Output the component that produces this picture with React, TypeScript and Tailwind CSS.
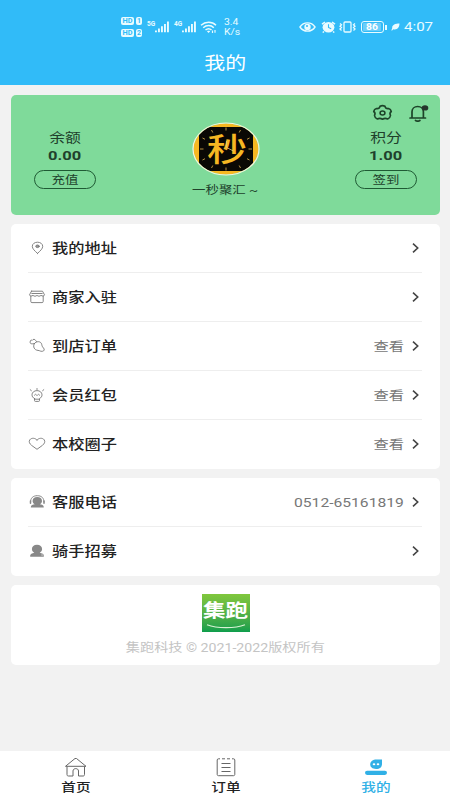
import React from "react";
import clsx from "clsx";

type IconProps = { className?: string };

type MenuItem = {
    label: string;
    icon: React.FC<IconProps>;
    value?: string;
};

// Wide lettering: every text on the screen is set a bit broader than the font itself
const Wide: React.FC<{ className?: string; children: React.ReactNode }> = ({ className, children }) => (
    <span className={clsx("block whitespace-nowrap", className, !className?.includes("scale-x") && "scale-x-[1.22]")}>
        {children}
    </span>
);

/* ---------- row icons, all on a 18x16 grid ---------- */

const rowIcon = {
    viewBox: "0 0 18 16",
    fill: "none",
    stroke: "#777",
    strokeWidth: 0.9,
    strokeLinecap: "round" as const,
    strokeLinejoin: "round" as const,
};

const PinIcon: React.FC<IconProps> = ({ className }) => (
    <svg className={className} {...rowIcon}>
        <path d="M9.500 13.400C6.600 10.700 4.300 8.800 4.300 6.300c0-2.400 2.300-4.100 5.200-4.100s5.200 1.700 5.200 4.100c0 2.500-2.300 4.400-5.200 7.100Z" />
        <ellipse cx="9.500" cy="6.300" rx="1.700" ry="1.300" fill="#999" />
    </svg>
);

const ShopIcon: React.FC<IconProps> = ({ className }) => (
    <svg className={className} {...rowIcon}>
        <path d="M3.500 2.200h11l2 3.600c0 1.300-2.400 1.700-3.500.5-1 1.200-3 1.200-4 0-1 1.200-3 1.200-4 0-1.100 1.200-3.500.8-3.500-.5l2-3.600Z" />
        <path d="M3.800 4.500h10.400M2.800 7.300v5.200c0 .8.500 1.100 1.200 1.100h10c.7 0 1.200-.3 1.200-1.100V7.300" />
    </svg>
);

const DrumstickIcon: React.FC<IconProps> = ({ className }) => (
    <svg className={className} {...rowIcon}>
        <path d="M6.300 5.700C8 2.700 13 3 13.700 6.300c.3 1.500.5 2.400 1.800 3.700 1.300 1.300.8 3.200-1.200 3.300-2 .2-2.300-.7-4.300-.9-3.700-.3-5.400-3.700-3.700-6.700Z" />
        <path d="M6.300 5.700 4.300 5.800C2.800 6 1.700 5 2.300 4c-.6-1.400.9-2.300 2-1.700C5 1 7 1 7.500 2.300l1 1.200" />
    </svg>
);

const BulbIcon: React.FC<IconProps> = ({ className }) => (
    <svg className={className} {...rowIcon}>
        <path d="M6.500 11.600C4.700 10.600 4 9.300 4 7.800c0-2.400 2.200-4.200 5-4.200s5 1.800 5 4.200c0 1.500-.7 2.800-2.500 3.800v2c0 .5-.4.800-.9.800H7.400c-.5 0-.9-.3-.9-.8v-2ZM6.700 12.200h4.600" />
        <path d="M9 1.500v1M2.200 2.700l1.200 1M15.800 2.700l-1.200 1M6.500 8.200l1-.9 1.100.9M9.500 8.200l1-.9 1.100.9" />
    </svg>
);

const HeartIcon: React.FC<IconProps> = ({ className }) => (
    <svg className={className} {...rowIcon}>
        <path d="M9 4C7.200 1.800 3.500 1.600 1.800 3.800c-1.400 2 0 4.100 1.700 5.500L9 13.300l5.500-4C16.200 7.900 17.600 5.800 16.200 3.800 14.500 1.600 10.800 1.800 9 4Z" />
    </svg>
);

const HeadsetIcon: React.FC<IconProps> = ({ className }) => (
    <svg className={className} {...rowIcon} stroke="#888">
        <path d="M2.500 8C2.500 4 5 1.700 9.300 1.700S16 4 16 8" strokeWidth="1" />
        <path d="M2.500 7v2.300M16 7v2.300" strokeWidth="1.500" />
        <path d="M9.300 3C6.400 3 4.600 4.600 4.600 7c0 1.500.9 2.700 2.200 3.300-2 .3-3.800 1.100-4 2.600 0 .4.200.6.600.6h11.800c.4 0 .6-.2.600-.6-.2-1.500-2-2.300-4-2.600C13.100 9.700 14 8.500 14 7c0-2.400-1.800-4-4.700-4Z" fill="#888" stroke="none" />
    </svg>
);

const RiderIcon: React.FC<IconProps> = ({ className }) => (
    <svg className={className} {...rowIcon} stroke="none" fill="#888">
        <path d="M9 1.700c-3.100 0-5.100 1.700-5.100 4.200 0 1.800 1 3 2.400 3.800-2.200.4-4.200 1.400-4.200 3.200 0 .6.300.9.800.9h12.200c.5 0 .8-.3.800-.9 0-1.800-2-2.800-4.200-3.200 1.400-.8 2.400-2 2.400-3.800 0-2.500-2-4.200-5.100-4.200Z" />
        <circle cx="14.300" cy="12" r="1.200" fill="#aaa" />
    </svg>
);

const ChevronIcon: React.FC<IconProps> = ({ className }) => (
    <svg className={className} viewBox="0 0 7 10" fill="none" stroke="#444" strokeWidth="1.600">
        <path d="m1 .7 4.700 4.300L1 9.300" />
    </svg>
);

/* ---------- status bar ---------- */

const HdBadge: React.FC<{ sim: string }> = ({ sim }) => (
    <div className="flex h-[8px] gap-[2px] text-[7px] font-bold leading-[8px] text-[#31bbf8]">
        <span className="w-[13px] rounded-[2px] bg-[#e9fbff] text-center">
            <Wide className="scale-x-[1.05]">HD</Wide>
        </span>
        <span className="w-[6px] rounded-[2px] bg-[#e9fbff] text-center">{sim}</span>
    </div>
);

const Signal: React.FC<{ net: string }> = ({ net }) => (
    <div className="flex h-[12px] w-[23px] items-start">
        <span className="w-[7px] text-[6.500px] font-bold leading-[7px]">{net}</span>
        <svg className="h-[12px] w-[16px]" viewBox="0 0 16 12" fill="#e9fbff">
            <path d="M1 9.500h1.900V11.300H1zM4 7.500h1.900v3.800H4zM7 5.300h1.900v6H7zM10 3h1.900v8.300H10zM13 .5h1.900v10.800H13z" />
        </svg>
    </div>
);

const StatusBar: React.FC = () => (
    <div className="flex h-[44px] items-start justify-between pl-[121px] pr-[18px] pt-[17px] text-[#e9fbff]">
        <div className="flex">
            <div className="flex flex-col gap-[4px]">
                <HdBadge sim="1" />
                <HdBadge sim="2" />
            </div>
            <div className="ml-[5px] mt-[4px] flex gap-[4px]">
                <Signal net="5G" />
                <Signal net="4G" />
            </div>
            <svg className="ml-[3px] mt-[4px] h-[13px] w-[18px]" viewBox="0 0 18 13" fill="none" stroke="#e9fbff" strokeWidth="1.500">
                <path d="M1 4.300C5.500.3 12 .3 16 4.300M3.200 6.700c3.300-2.900 7.700-2.900 10.600 0M5.500 9c1.900-1.600 4.300-1.600 6 0" />
                <path d="M7 10.300 8.500 12l1.700-1.700C9.300 9.700 7.900 9.700 7 10.300Z" fill="#e9fbff" stroke="none" />
                <path d="M12.500 12V9.500M15 9v2.800" strokeWidth="1.200" />
            </svg>
            <div className="ml-[6px] text-[8.500px] leading-[10px]">
                <Wide className="origin-left">3.4</Wide>
                <Wide className="origin-left">K/s</Wide>
            </div>
        </div>
        <div className="mt-[2px] flex h-[16px] items-center">
            <svg className="h-[12px] w-[17px]" viewBox="0 0 17 12" fill="none" stroke="#e9fbff">
                <path d="M1 6c3.500-5.500 11.500-5.500 15 0-3.500 5.500-11.500 5.500-15 0Z" strokeWidth="1.400" />
                <circle cx="8.500" cy="6" r="3.200" fill="#e9fbff" stroke="none" />
                <circle cx="8" cy="5" r="1" fill="#31bbf8" stroke="none" />
            </svg>
            <svg className="ml-[5px] h-[12px] w-[15px]" viewBox="0 0 15 12">
                <ellipse cx="7.500" cy="6.300" rx="5.900" ry="5.200" fill="#e9fbff" />
                <path d="M1 3.200 4 1M14 3.200 11 1M3 10.500l-1.300 1M12 10.500l1.300 1" stroke="#e9fbff" strokeWidth="1.500" />
                <path d="M7.500 3.300v3.200l2.700 1.300" stroke="#31bbf8" strokeWidth="1.100" fill="none" />
            </svg>
            <svg className="ml-[3px] h-[12px] w-[17px]" viewBox="0 0 17 12" fill="none" stroke="#e9fbff" strokeWidth="1.300">
                <rect x="5" y="1" width="7" height="10" rx="1" />
                <path d="m1 2.500 1.500 1.300L1 5.200l1.500 1.400L1 8l1.500 1.400M16 2.500l-1.500 1.300L16 5.200l-1.500 1.400L16 8l-1.500 1.400" />
            </svg>
            <div className="ml-[5px] flex h-[12px] w-[23px] rounded-[3px] border border-[#e9fbff] p-px">
                <div className="w-[18px] rounded-[1px] bg-[#6bcdf9] text-center text-[9px] font-bold leading-[9px] text-white">
                    <Wide className="scale-x-[1.15]">86</Wide>
                </div>
            </div>
            <div className="ml-px h-[5px] w-[2px] bg-[#e9fbff]" />
            <svg className="ml-[4px] h-[8px] w-[9px]" viewBox="0 0 10 9" fill="#e9fbff">
                <path d="M9.500.5C5 .7 1 1.800 1.300 5.500L.3 8.300l.9.200L2.500 7C7 8 9.300 5 9.500.5Z" />
            </svg>
            <div className="ml-[4px] w-[28px] text-[13px] leading-4">
                <Wide className="origin-left scale-x-[1.160]">4:07</Wide>
            </div>
        </div>
    </div>
);

/* ---------- wallet card ---------- */

const Balance: React.FC<{ title: string; amount: string; action: string }> = ({ title, amount, action }) => (
    <div className="flex w-[108px] flex-col items-center pt-[33px] text-[#20402b]">
        <Wide className="text-[13px] leading-[19px]">{title}</Wide>
        <Wide className="text-[13.500px] font-bold leading-4">{amount}</Wide>
        <button className="mt-[7px] flex h-[19px] w-[62px] items-center justify-center rounded-full border border-[#1f5a34] pt-px text-[11px] leading-none">
            <Wide>{action}</Wide>
        </button>
    </div>
);

const Avatar: React.FC = () => (
    <svg className="h-[54px] w-[68px]" viewBox="0 0 68 54">
        <defs>
            <clipPath id="avatar">
                <ellipse cx="34" cy="27" rx="32.500" ry="25.500" />
            </clipPath>
        </defs>
        <g clipPath="url(#avatar)">
            <rect width="68" height="54" fill="#f6b722" />
            <rect x="7" y="5" width="54" height="44" rx="7" fill="#0a0804" />
        </g>
        <ellipse cx="34" cy="27" rx="33" ry="26" fill="none" stroke="#f3f6dc" strokeWidth="1.200" />
        <path
            d="M34 5.500v3M34 45.500v3M8 27h3.500M56.500 27h3.500M19.500 8l1.300 2.500M48.500 8l-1.300 2.500M19.500 46l1.300-2.500M48.500 46l-1.300-2.500M10.500 16l2.500 1.300M57.500 16 55 17.300M10.500 38l2.500-1.300M57.500 38 55 36.700"
            stroke="#c9a24a"
            strokeWidth="0.900"
        />
        <text
            transform="translate(35 38.500) scale(1.250 1)"
            textAnchor="middle"
            fontSize="32"
            fontWeight="500"
            fill="#f6b722"
        >
            秒
        </text>
        <path d="M34.500 19v6.500l7 3.500" fill="none" stroke="#e6c878" strokeWidth="0.800" />
    </svg>
);

const WalletCard: React.FC = () => (
    <section className="relative flex h-[120px] justify-between rounded-[5px] bg-[#7fda9a]">
        <Balance title="余额" amount="0.00" action="充值" />
        <div className="flex flex-col items-center pt-[27px] text-[#20402b]">
            <Avatar />
            <Wide className="mt-[7px] text-[11px] leading-4">一秒聚汇 ~</Wide>
        </div>
        <Balance title="积分" amount="1.00" action="签到" />
        <div className="absolute right-[11px] top-[9px] flex gap-[15px]">
            <svg className="h-[18px] w-[21px]" viewBox="0 0 21 18" fill="none" stroke="#1d4429" strokeWidth="1.600" strokeLinejoin="round">
                <path d="M8 2.300Q10.500 1 13 2.300C13.300 4 14.300 4.800 16.500 4.600Q18.800 5.200 19.300 7.500C17.700 8.700 17.500 9.800 18.500 11.500Q18.200 14 15.700 15C13.700 14 12.500 14 10.500 15.200 8.500 14 7.300 14 5.300 15Q2.800 14 2.500 11.500C3.500 9.800 3.300 8.700 1.700 7.500Q2.200 5.200 4.500 4.600C6.700 4.800 7.700 4 8 2.300Z" />
                <ellipse cx="10.500" cy="9" rx="2.400" ry="2" />
            </svg>
            <svg className="h-[18px] w-[21px]" viewBox="0 0 21 18" fill="none" stroke="#1d4429" strokeWidth="1.700" strokeLinecap="round">
                <path d="M2 14h15.500M4 14V7.800c0-3 2.300-5.300 5.700-5.300 3.400 0 5.700 2.300 5.700 5.300V14M7.500 16.500c1.300.8 3.100.8 4.400 0" />
                <ellipse cx="17" cy="3.900" rx="3.300" ry="2.700" fill="#26352b" stroke="none" />
            </svg>
        </div>
    </section>
);

/* ---------- menu ---------- */

const services: MenuItem[] = [
    { label: "我的地址", icon: PinIcon },
    { label: "商家入驻", icon: ShopIcon },
    { label: "到店订单", icon: DrumstickIcon, value: "查看" },
    { label: "会员红包", icon: BulbIcon, value: "查看" },
    { label: "本校圈子", icon: HeartIcon, value: "查看" },
];

const contacts: MenuItem[] = [
    { label: "客服电话", icon: HeadsetIcon, value: "0512-65161819" },
    { label: "骑手招募", icon: RiderIcon },
];

const MenuCard: React.FC<{ items: MenuItem[] }> = ({ items }) => (
    <section className="rounded-[5px] bg-white pl-[17px] pr-[18px]">
        {items.map(({ label, icon: Icon, value }) => (
            <div key={label} className="flex h-[49px] items-center border-b border-[#eeeeee] last:border-b-transparent">
                <Icon className="h-4 w-[18px]" />
                <Wide className="ml-[5.500px] origin-left pt-[2px] text-[13.300px] font-medium text-[#222]">{label}</Wide>
                <div className="ml-auto flex items-center">
                    {value && (
                        <Wide
                            className={clsx(
                                "origin-right pt-[2px] text-[12.500px] text-[#777]",
                                value.length > 2 ? "scale-x-[1.250]" : "scale-x-[1.220]"
                            )}
                        >
                            {value}
                        </Wide>
                    )}
                    <ChevronIcon className="ml-[8px] mr-[3px] h-[10px] w-[7px]" />
                </div>
            </div>
        ))}
    </section>
);

const CompanyCard: React.FC = () => (
    <section className="flex h-[80px] flex-col items-center rounded-[5px] bg-white pt-[9px]">
        <div className="flex h-[38px] w-[48px] flex-col items-center bg-linear-to-b from-[#80c73c] to-[#0b9e4c] pt-[7px] text-white">
            <Wide className="text-[18.500px] font-bold leading-[20px]">集跑</Wide>
            <svg className="mt-[3px] h-[5px] w-[40px]" viewBox="0 0 40 5" fill="none" stroke="#d9f2d4">
                <path d="M1 .7c10 4 28 4 38 0" strokeWidth="1.200" />
            </svg>
        </div>
        <Wide className="mt-[7px] scale-x-[1.180] text-[12px] leading-[18px] text-[#c4c4c4]">
            集跑科技 © 2021-2022版权所有
        </Wide>
    </section>
);

/* ---------- bottom tabs ---------- */

const HomeIcon: React.FC<IconProps> = ({ className }) => (
    <svg className={className} viewBox="0 0 24 20" fill="none" stroke="#666" strokeWidth="1" strokeLinejoin="round">
        <path d="M1.500 9.300 11 1.500h1.500L22 9.300H1.500ZM3 9.500v8c0 1 .5 1.500 1.500 1.500H9v-5c0-3.200 5.500-3.200 5.500 0v5H19c1 0 1.500-.5 1.500-1.500v-8" />
    </svg>
);

const OrderIcon: React.FC<IconProps> = ({ className }) => (
    <svg className={className} viewBox="0 0 24 20" fill="none" stroke="#666" strokeWidth="1">
        <path d="M6 1.800H4.500c-.8 0-1.300.5-1.300 1.200v14.500c0 .7.500 1.200 1.300 1.200h15c.8 0 1.300-.5 1.300-1.200V3c0-.7-.5-1.200-1.300-1.200H18M8 1.800h3M13 1.800h3" />
        <path d="M7.500 6.500h9M7.500 10.500h9M7.500 14.500h9" strokeWidth="1.100" />
    </svg>
);

const MineIcon: React.FC<IconProps> = ({ className }) => (
    <svg className={className} viewBox="0 0 24 20" fill="#30b0e6">
        <path d="M12.500 2.500H18V7c0 3-2.200 5-6 5s-5.800-2-5.800-4.700c0-2.900 2.500-4.800 6.300-4.800Z" />
        <rect x="1" y="13.700" width="22" height="4.200" rx="2.100" />
        <ellipse cx="10" cy="7.300" rx="1.300" ry="1" fill="#fff" />
        <ellipse cx="14" cy="7.300" rx="1.300" ry="1" fill="#fff" />
    </svg>
);

const tabs = [
    { label: "首页", icon: HomeIcon, active: false },
    { label: "订单", icon: OrderIcon, active: false },
    { label: "我的", icon: MineIcon, active: true },
];

const TabBar: React.FC = () => (
    <nav className="grid h-[49px] grid-cols-3 bg-white">
        {tabs.map(({ label, icon: Icon, active }) => (
            <div key={label} className="flex flex-col items-center pl-[2px] pt-[6px]">
                <Icon className="h-5 w-6" />
                <Wide
                    className={clsx(
                        "mt-[2px] text-[12px] font-medium leading-[18px]",
                        active ? "text-[#30b0e6]" : "text-[#222]"
                    )}
                >
                    {label}
                </Wide>
            </div>
        ))}
    </nav>
);

const App: React.FC = () => {
    return (
        <div className="flex h-[800px] w-[450px] flex-col overflow-hidden bg-[#f2f2f2] font-[Roboto,'Noto_Sans_CJK_SC',sans-serif]">
            <header className="h-[85px] bg-[#31bbf8] text-white">
                <StatusBar />
                <h1 className="flex justify-center text-[17.200px] leading-[39px]">
                    <Wide>我的</Wide>
                </h1>
            </header>
            <main className="flex flex-1 flex-col gap-[9px] pl-[11px] pr-[10px] pt-[10px]">
                <WalletCard />
                <MenuCard items={services} />
                <MenuCard items={contacts} />
                <CompanyCard />
            </main>
            <TabBar />
        </div>
    );
};

export default App;
